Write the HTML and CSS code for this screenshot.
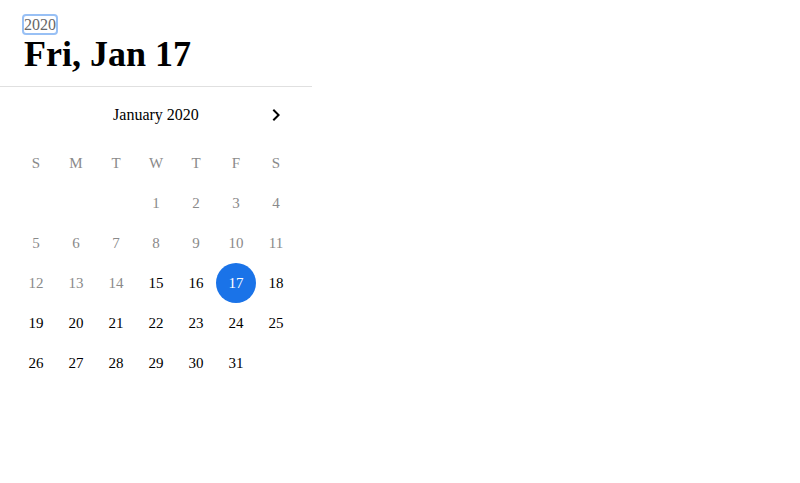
FILE: index.html
```html
<!DOCTYPE html>
<html>
<head>
<meta charset="utf-8">
<link rel="stylesheet" href="styles.css">
</head>
<body>
<div class="picker">
  <div class="toolbar">
    <div class="year"><span class="year-btn">2020</span></div>
    <h1 class="date">Fri, Jan 17</h1>
  </div>
  <div class="calendar">
    <div class="month-head">
      <span class="nav nav-hidden"></span>
      <span class="month-title">January 2020</span>
      <span class="nav">
        <svg width="24" height="24" viewBox="0 0 24 24"><path d="M8.59 16.59L13.17 12 8.59 7.41 10 6l6 6-6 6-1.41-1.41z" fill="#000"/></svg>
      </span>
    </div>
    <div class="grid">
      <span class="wd">S</span><span class="wd">M</span><span class="wd">T</span><span class="wd">W</span><span class="wd">T</span><span class="wd">F</span><span class="wd">S</span>
      <span></span><span></span><span></span>
      <span class="day off">1</span><span class="day off">2</span><span class="day off">3</span><span class="day off">4</span>
      <span class="day off">5</span><span class="day off">6</span><span class="day off">7</span><span class="day off">8</span><span class="day off">9</span><span class="day off">10</span><span class="day off">11</span>
      <span class="day off">12</span><span class="day off">13</span><span class="day off">14</span><span class="day">15</span><span class="day">16</span><span class="day sel">17</span><span class="day">18</span>
      <span class="day">19</span><span class="day">20</span><span class="day">21</span><span class="day">22</span><span class="day">23</span><span class="day">24</span><span class="day">25</span>
      <span class="day">26</span><span class="day">27</span><span class="day">28</span><span class="day">29</span><span class="day">30</span><span class="day">31</span>
    </div>
  </div>
</div>
</body>
</html>
```
FILE: styles.css
```css
html, body {
  margin: 0;
  padding: 0;
  background: #fff;
  font-family: "Liberation Serif", "Times New Roman", serif;
  color: #000;
}
.picker {
  width: 312px;
}
.toolbar {
  padding: 16px 24px 12px 24px;
  border-bottom: 1px solid #e0e0e0;
}
.year {
  height: 18px;
  line-height: 18px;
  font-size: 16px;
}
.year-btn {
  color: #666;
  outline: 2px solid rgba(26, 115, 232, 0.45);
  outline-offset: 0;
  border-radius: 2px;
}
.date {
  margin: 0;
  font-size: 36px;
  line-height: 40px;
  font-weight: bold;
}
.calendar {
  padding: 1px 16px 0 16px;
}
.month-head {
  display: flex;
  align-items: center;
  height: 54px;
}
.nav {
  width: 40px;
  height: 40px;
  display: flex;
  align-items: center;
  justify-content: center;
}
.nav-hidden {
  visibility: hidden;
}
.month-title {
  flex: 1;
  text-align: center;
  font-size: 16px;
}
.grid {
  display: grid;
  grid-template-columns: repeat(7, 40px);
  grid-auto-rows: 40px;
  margin-top: 1px;
}
.grid span {
  display: flex;
  align-items: center;
  justify-content: center;
  font-size: 15px;
}
.wd {
  color: #8a8a8a;
}
.day.off {
  color: #8a8a8a;
}
.day.sel {
  background: #1a73e8;
  color: #fff;
  border-radius: 50%;
}
```
